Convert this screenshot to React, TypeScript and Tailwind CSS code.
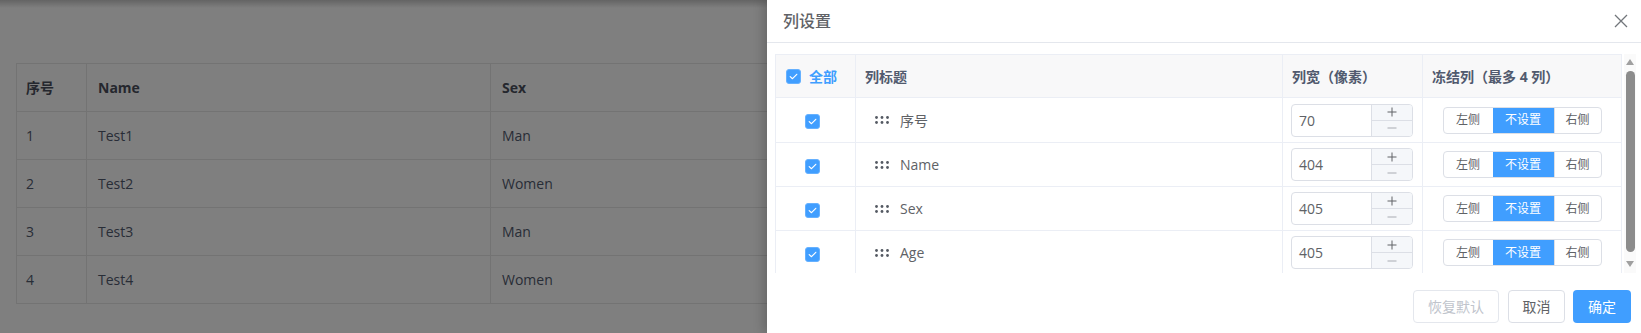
import React from 'react';

interface ColumnSetting {
  title: string;
  width: number;
}

const pageRows = [
  { no: '1', name: 'Test1', sex: 'Man' },
  { no: '2', name: 'Test2', sex: 'Women' },
  { no: '3', name: 'Test3', sex: 'Man' },
  { no: '4', name: 'Test4', sex: 'Women' },
];

const columns: ColumnSetting[] = [
  { title: '序号', width: 70 },
  { title: 'Name', width: 404 },
  { title: 'Sex', width: 405 },
  { title: 'Age', width: 405 },
];

const Checkbox: React.FC = () => (
  <span className="w-[15px] h-[15px] rounded-[3px] bg-[#409eff] border border-[#66b1ff] flex items-center justify-center shrink-0">
    <svg width="9" height="7" viewBox="0 0 9 7" fill="none">
      <path d="M1.2 3.6 L3.5 5.7 L7.8 1.3" stroke="#fff" strokeWidth="1.2" strokeLinecap="round" strokeLinejoin="round" />
    </svg>
  </span>
);

const DragDots: React.FC = () => (
  <svg width="14" height="8" viewBox="0 0 14 8" className="shrink-0">
    {[1.5, 7, 12.5].map((x) =>
      [1.5, 6.5].map((y) => <circle key={`${x}-${y}`} cx={x} cy={y} r="1.4" fill="#555a63" />)
    )}
  </svg>
);

const NumberInput: React.FC<{ value: number }> = ({ value }) => (
  <div className="w-[122px] h-[33px] border border-[#dcdfe6] rounded-[4px] flex overflow-hidden">
    <div className="flex-1 flex items-center pl-[7px] text-[14px] text-[#606266]">{value}</div>
    <div className="w-[41px] border-l border-[#dcdfe6] bg-[#f5f7fa] flex flex-col">
      <div className="flex-1 flex items-center justify-center border-b border-[#dcdfe6]">
        <svg width="10" height="10" viewBox="0 0 10 10">
          <path d="M5 0.5 V9.5 M0.5 5 H9.5" stroke="#606266" strokeWidth="1" />
        </svg>
      </div>
      <div className="flex-1 flex items-center justify-center">
        <svg width="10" height="10" viewBox="0 0 10 10">
          <path d="M0.5 5 H9.5" stroke="#a8abb2" strokeWidth="1" />
        </svg>
      </div>
    </div>
  </div>
);

const FreezeToggle: React.FC = () => (
  <div className="h-[27px] flex border border-[#dcdfe6] rounded-[4px] overflow-hidden text-[12px]">
    <span className="w-[49px] flex items-center justify-center text-[#606266]">左侧</span>
    <span className="w-[61px] flex items-center justify-center bg-[#409eff] text-white">不设置</span>
    <span className="w-[47px] flex items-center justify-center text-[#606266] border-l border-[#dcdfe6]">右侧</span>
  </div>
);

const App: React.FC = () => {
  return (
    <div className="relative w-[1641px] h-[333px] overflow-hidden bg-white font-['Open_Sans','Noto_Sans_CJK_SC',sans-serif]">
      {/* page behind the drawer */}
      <div className="h-[8px] bg-gradient-to-b from-[#c8c8c8] to-white" />
      <div className="ml-[16px] mt-[55px] w-[1286px] border-l border-t border-[#e6e6e6] text-[14px] text-[#515a6e]">
        <div className="flex h-[48px] border-b border-[#e6e6e6] font-bold text-[#4a4f5c]">
          <div className="w-[70px] border-r border-[#e6e6e6] flex items-center pl-[9px]">序号</div>
          <div className="w-[404px] border-r border-[#e6e6e6] flex items-center pl-[11px]">Name</div>
          <div className="w-[405px] border-r border-[#e6e6e6] flex items-center pl-[11px]">Sex</div>
          <div className="w-[405px] border-r border-[#e6e6e6] flex items-center pl-[11px]">Age</div>
        </div>
        {pageRows.map((r) => (
          <div key={r.no} className="flex h-[48px] border-b border-[#e6e6e6]">
            <div className="w-[70px] border-r border-[#e6e6e6] flex items-center pl-[9px]">{r.no}</div>
            <div className="w-[404px] border-r border-[#e6e6e6] flex items-center pl-[11px]">{r.name}</div>
            <div className="w-[405px] border-r border-[#e6e6e6] flex items-center pl-[11px]">{r.sex}</div>
            <div className="w-[405px] border-r border-[#e6e6e6] flex items-center pl-[11px]">18</div>
          </div>
        ))}
      </div>

      {/* mask */}
      <div className="absolute inset-0 bg-black/50" />

      {/* drawer */}
      <div className="absolute top-0 right-0 h-[333px] w-[874px] bg-white flex flex-col shadow-[-4px_0_10px_rgba(0,0,0,0.18)]">
        <div className="h-[43px] shrink-0 border-b border-[#e4e7ed] flex items-center justify-between pl-[16px] pr-[13px]">
          <span className="text-[16px] font-medium text-[#606266]">列设置</span>
          <svg width="14" height="14" viewBox="0 0 14 14">
            <path d="M1 1 L13 13 M13 1 L1 13" stroke="#72767b" strokeWidth="1.3" />
          </svg>
        </div>

        <div className="flex pl-[8px] pt-[11px]">
          <div className="w-[847px] h-[219px] overflow-hidden border-l border-t border-[#ebeef5] text-[14px]">
            <div className="flex h-[43px] bg-[#f8f8f9] border-b border-[#ebeef5] font-bold text-[#515a6e]">
              <div className="w-[80px] border-r border-[#ebeef5] flex items-center pl-[10px] gap-[8px]">
                <Checkbox />
                <span className="text-[#409eff]">全部</span>
              </div>
              <div className="w-[427px] border-r border-[#ebeef5] flex items-center pl-[9px]">列标题</div>
              <div className="w-[140px] border-r border-[#ebeef5] flex items-center pl-[9px]">列宽（像素）</div>
              <div className="w-[199px] border-r border-[#ebeef5] flex items-center pl-[9px]">冻结列（最多 4 列）</div>
            </div>
            {columns.map((c, i) => (
              <div
                key={c.title}
                className={`flex border-b border-[#ebeef5] text-[#606266] ${i === 0 ? 'h-[45px]' : 'h-[44px]'}`}
              >
                <div className="w-[80px] border-r border-[#ebeef5] flex items-center pl-[29px] pt-[3px]">
                  <Checkbox />
                </div>
                <div className="w-[427px] border-r border-[#ebeef5] flex items-center pl-[19px] gap-[11px]">
                  <DragDots />
                  <span>{c.title}</span>
                </div>
                <div className="w-[140px] border-r border-[#ebeef5] flex items-center pl-[8px]">
                  <NumberInput value={c.width} />
                </div>
                <div className="w-[199px] border-r border-[#ebeef5] flex items-center justify-center">
                  <FreezeToggle />
                </div>
              </div>
            ))}
          </div>

          {/* scrollbar */}
          <div className="w-[12px] ml-[2px] h-[219px] flex flex-col items-center bg-[#fafafa]">
            <svg width="8" height="6" viewBox="0 0 8 6" className="mt-[5px]">
              <path d="M4 0 L8 6 L0 6 Z" fill="#a0a0a0" />
            </svg>
            <div className="w-[9px] flex-1 mt-[6px] mb-[9px] rounded-full bg-[#8c8c8c]" />
            <svg width="8" height="6" viewBox="0 0 8 6" className="mb-[6px]">
              <path d="M0 0 L8 0 L4 6 Z" fill="#a0a0a0" />
            </svg>
          </div>
        </div>

        <div className="flex justify-end pt-[17px] pr-[10px] text-[14px]">
          <button className="w-[86px] h-[33px] rounded-[4px] border border-[#e4e7ed] text-[#c0c4cc] bg-white">恢复默认</button>
          <button className="w-[57px] h-[33px] ml-[9px] rounded-[4px] border border-[#dcdfe6] text-[#606266] bg-white">取消</button>
          <button className="w-[58px] h-[33px] ml-[8px] rounded-[4px] bg-[#409eff] text-white">确定</button>
        </div>
      </div>
    </div>
  );
};

export default App;
